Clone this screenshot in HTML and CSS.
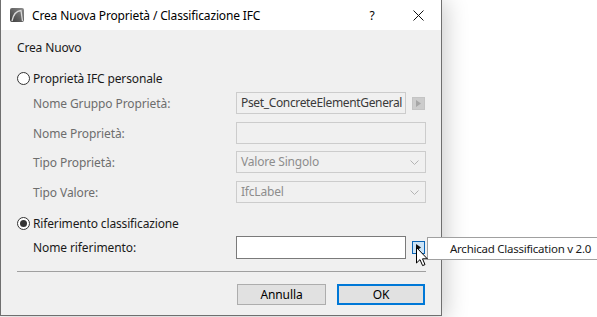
FILE: index.html
```html
<!DOCTYPE html>
<html lang="it">
<head>
<meta charset="utf-8">
<title>Crea Nuova Proprietà / Classificazione IFC</title>
<link rel="stylesheet" href="styles.css">
</head>
<body>
<div class="window">
  <div class="titlebar">
    <svg class="app-icon" width="14" height="14" viewBox="0 0 14 14">
      <defs>
        <linearGradient id="g" x1="0" y1="1" x2="1" y2="0">
          <stop offset="0" stop-color="#3c3c3c"/>
          <stop offset="1" stop-color="#8c8c8c"/>
        </linearGradient>
      </defs>
      <rect x="0" y="0" width="14" height="14" rx="2" fill="url(#g)"/>
      <path d="M2 13 Q4 3 11 2.5 L12.5 13" fill="none" stroke="#d8d8d8" stroke-width="1.3"/>
    </svg>
    <span class="title">Crea Nuova Proprietà / Classificazione IFC</span>
    <span class="cap-btn help">?</span>
    <span class="cap-btn">
      <svg width="11" height="11" viewBox="0 0 11 11"><path d="M0.5 0.5 L10.5 10.5 M10.5 0.5 L0.5 10.5" stroke="#111" stroke-width="1"/></svg>
    </span>
  </div>
  <div class="content">
    <div class="heading">Crea Nuovo</div>
    <div class="radio-row first">
      <span class="radio"></span>
      <span>Proprietà IFC personale</span>
    </div>
    <div class="form">
      <div class="row r1">
        <span class="label">Nome Gruppo Proprietà:</span>
        <div class="ctl">
          <div class="field disabled short dark-text">Pset_ConcreteElementGeneral</div>
          <span class="mini disabled-mini"><svg width="5" height="7" viewBox="0 0 5 7"><path d="M0 0 L5 3.5 L0 7Z" fill="#a6a6a6"/></svg></span>
        </div>
      </div>
      <div class="row r2">
        <span class="label">Nome Proprietà:</span>
        <div class="ctl"><div class="field disabled wide"></div></div>
      </div>
      <div class="row r3">
        <span class="label">Tipo Proprietà:</span>
        <div class="ctl">
          <div class="field disabled wide select">Valore Singolo<svg class="chev" width="9" height="5" viewBox="0 0 9 5"><path d="M0.5 0.5 L4.5 4.5 L8.5 0.5" fill="none" stroke="#b4b4b4" stroke-width="1"/></svg></div>
        </div>
      </div>
      <div class="row r4">
        <span class="label">Tipo Valore:</span>
        <div class="ctl">
          <div class="field disabled wide select">IfcLabel<svg class="chev" width="9" height="5" viewBox="0 0 9 5"><path d="M0.5 0.5 L4.5 4.5 L8.5 0.5" fill="none" stroke="#b4b4b4" stroke-width="1"/></svg></div>
        </div>
      </div>
    </div>
    <div class="radio-row second">
      <span class="radio checked"></span>
      <span>Riferimento classificazione</span>
    </div>
    <div class="form">
      <div class="row r5">
        <span class="label enabled">Nome riferimento:</span>
        <div class="ctl">
          <div class="field active short"></div>
          <span class="mini active-mini"><svg width="5" height="7" viewBox="0 0 5 7"><path d="M0 0 L5 3.5 L0 7Z" fill="#111"/></svg></span>
        </div>
      </div>
    </div>
    <div class="separator"></div>
    <div class="buttons">
      <button class="btn">Annulla</button>
      <button class="btn default">OK</button>
    </div>
  </div>
</div>
<div class="tooltip">Archicad Classification v 2.0</div>
<svg class="cursor" width="13" height="20" viewBox="0 0 13 20">
  <path d="M0.5 0.5 L0.5 16 L4 12.6 L6.6 18.6 L9 17.6 L6.5 11.8 L11.3 11.8 Z" fill="#fff" stroke="#000" stroke-width="1" stroke-linejoin="miter"/>
</svg>
</body>
</html>
```
FILE: styles.css
```css
html, body {
  margin: 0;
  padding: 0;
  background: #ffffff;
  overflow: hidden;
  width: 597px;
  height: 317px;
}
body {
  position: relative;
  font-family: "Noto Sans", "Open Sans", sans-serif;
  font-size: 12px;
  color: #1a1a1a;
}
.window {
  width: 440px;
  height: 315px;
  border: 1px solid #6f6f6f;
  border-top: 0;
  background: #f0f0f0;
  box-shadow: 2px 2px 22px 2px rgba(0, 0, 0, 0.2);
  display: flex;
  flex-direction: column;
}
.titlebar {
  height: 30px;
  background: #ffffff;
  display: flex;
  align-items: center;
  padding-left: 9px;
  flex: none;
}
.app-icon {
  margin-right: 8px;
  flex: none;
}
.title {
  font-size: 12px;
  color: #000;
  letter-spacing: -0.15px;
}
.cap-btn {
  width: 46px;
  height: 30px;
  display: flex;
  align-items: center;
  justify-content: center;
  font-size: 12px;
  color: #000;
}
.cap-btn.help {
  margin-left: auto;
}
.content {
  padding: 10px 16px 0 16px;
  display: flex;
  flex-direction: column;
}
.heading {
  height: 16px;
  line-height: 16px;
  letter-spacing: -0.15px;
}
.radio-row {
  height: 16px;
  display: flex;
  align-items: center;
  letter-spacing: -0.15px;
}
.radio-row.first { margin-top: 14px; }
.radio-row.second { margin-top: 12px; }
.radio {
  width: 11px;
  height: 11px;
  border: 1px solid #333;
  border-radius: 50%;
  background: #fff;
  margin-right: 3px;
  position: relative;
  flex: none;
}
.radio.checked::after {
  content: "";
  position: absolute;
  left: 2px;
  top: 2px;
  width: 7px;
  height: 7px;
  border-radius: 50%;
  background: #333;
}
.form {
  padding-left: 16px;
  display: flex;
  flex-direction: column;
}
.row {
  display: grid;
  grid-template-columns: 203px 1fr;
  align-items: center;
}
.r1 { margin-top: 6px; }
.r2 { margin-top: 8px; }
.r3 { margin-top: 7px; }
.r4 { margin-top: 8px; }
.r5 { margin-top: 5px; }
.label {
  color: #6d6d6d;
  letter-spacing: -0.1px;
}
.label.enabled { color: #1a1a1a; }
.ctl {
  display: flex;
  align-items: center;
}
.field {
  box-sizing: border-box;
  height: 22px;
  line-height: 20px;
  padding: 0 4px;
  white-space: nowrap;
  overflow: hidden;
  letter-spacing: -0.2px;
}
.field.disabled {
  border: 1px solid #cccccc;
  background: #f0f0f0;
  color: #8d8d8d;
}
.field.dark-text {
  color: #3a3a3a;
  letter-spacing: -0.35px;
}
.field.short { width: 170px; }
.field.wide { width: 190px; }
.field.select {
  display: flex;
  align-items: center;
  justify-content: space-between;
  padding-right: 6px;
}
.field.active {
  height: 23px;
  border: 1px solid #7a7a7a;
  background: #ffffff;
}
.mini {
  box-sizing: border-box;
  width: 13px;
  height: 13px;
  margin-left: 6px;
  display: flex;
  align-items: center;
  justify-content: center;
}
.disabled-mini {
  background: #cccccc;
  border: 1px solid #c4c4c4;
}
.active-mini {
  background: #cce4f7;
  border: 1px solid #0a64b4;
}
.separator {
  margin-top: 12px;
  height: 1px;
  background: #a0a0a0;
  margin-right: -1px;
}
.buttons {
  margin-top: 12px;
  display: flex;
  justify-content: flex-end;
  gap: 11px;
}
.btn {
  box-sizing: border-box;
  height: 21px;
  width: 89px;
  font-family: inherit;
  font-size: 12px;
  color: #000;
  background: #e1e1e1;
  border: 1px solid #adadad;
  padding: 0;
  margin: 0;
  letter-spacing: -0.1px;
}
.btn.default {
  width: 88px;
  border: 2px solid #0078d7;
}
.tooltip {
  position: absolute;
  left: 427px;
  top: 237px;
  width: 175px;
  height: 23px;
  box-sizing: border-box;
  border: 1px solid #a0a0a0;
  background: #ffffff;
  padding-left: 22px;
  line-height: 21px;
  color: #1a1a1a;
  white-space: nowrap;
  font-size: 11.5px;
  letter-spacing: -0.25px;
}
.cursor {
  position: absolute;
  left: 416px;
  top: 247px;
}
```
